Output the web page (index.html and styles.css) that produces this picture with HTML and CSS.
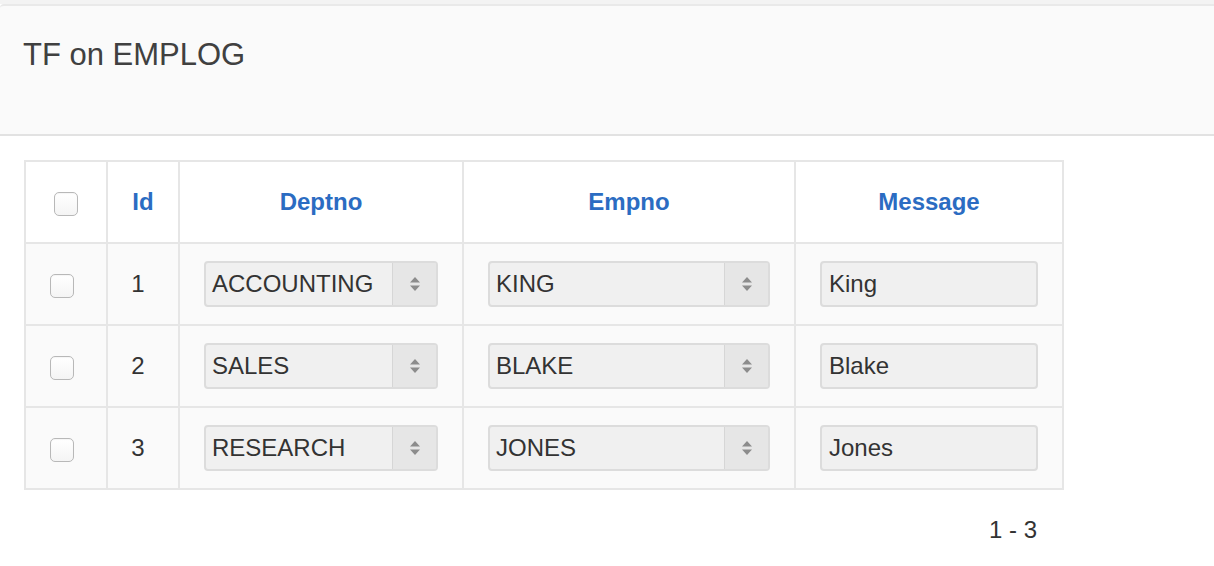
FILE: index.html
```html
<!DOCTYPE html>
<html lang="en">
<head>
<meta charset="utf-8">
<title>TF on EMPLOG</title>
<link rel="stylesheet" href="styles.css">
</head>
<body>
<div class="topstrip"></div>
<header class="region-head">
  <h1 class="title">TF on EMPLOG</h1>
</header>
<main class="content">
  <table class="grid">
    <colgroup>
      <col class="c-check">
      <col class="c-id">
      <col class="c-dept">
      <col class="c-emp">
      <col class="c-msg">
    </colgroup>
    <thead>
      <tr>
        <th class="hcheck"><input type="checkbox" class="cb"></th>
        <th>Id</th>
        <th>Deptno</th>
        <th>Empno</th>
        <th>Message</th>
      </tr>
    </thead>
    <tbody>
      <tr>
        <td class="bcheck"><input type="checkbox" class="cb"></td>
        <td class="idcell">1</td>
        <td><div class="sel"><span class="sel-text">ACCOUNTING</span><span class="sel-btn"><svg width="10" height="14" viewBox="0 0 10 14"><path d="M5 0 L10 5.5 L0 5.5 Z M5 14 L10 8.5 L0 8.5 Z" fill="#8c8c8c"/></svg></span></div></td>
        <td><div class="sel"><span class="sel-text">KING</span><span class="sel-btn"><svg width="10" height="14" viewBox="0 0 10 14"><path d="M5 0 L10 5.5 L0 5.5 Z M5 14 L10 8.5 L0 8.5 Z" fill="#8c8c8c"/></svg></span></div></td>
        <td><div class="inp">King</div></td>
      </tr>
      <tr>
        <td class="bcheck"><input type="checkbox" class="cb"></td>
        <td class="idcell">2</td>
        <td><div class="sel"><span class="sel-text">SALES</span><span class="sel-btn"><svg width="10" height="14" viewBox="0 0 10 14"><path d="M5 0 L10 5.5 L0 5.5 Z M5 14 L10 8.5 L0 8.5 Z" fill="#8c8c8c"/></svg></span></div></td>
        <td><div class="sel"><span class="sel-text">BLAKE</span><span class="sel-btn"><svg width="10" height="14" viewBox="0 0 10 14"><path d="M5 0 L10 5.5 L0 5.5 Z M5 14 L10 8.5 L0 8.5 Z" fill="#8c8c8c"/></svg></span></div></td>
        <td><div class="inp">Blake</div></td>
      </tr>
      <tr>
        <td class="bcheck"><input type="checkbox" class="cb"></td>
        <td class="idcell">3</td>
        <td><div class="sel"><span class="sel-text">RESEARCH</span><span class="sel-btn"><svg width="10" height="14" viewBox="0 0 10 14"><path d="M5 0 L10 5.5 L0 5.5 Z M5 14 L10 8.5 L0 8.5 Z" fill="#8c8c8c"/></svg></span></div></td>
        <td><div class="sel"><span class="sel-text">JONES</span><span class="sel-btn"><svg width="10" height="14" viewBox="0 0 10 14"><path d="M5 0 L10 5.5 L0 5.5 Z M5 14 L10 8.5 L0 8.5 Z" fill="#8c8c8c"/></svg></span></div></td>
        <td><div class="inp">Jones</div></td>
      </tr>
    </tbody>
  </table>
  <div class="pager">1 - 3</div>
</main>
</body>
</html>
```

FILE: styles.css
```css
* { box-sizing: border-box; }
html, body {
  margin: 0;
  padding: 0;
  background: #ffffff;
  font-family: "Liberation Sans", Arial, Helvetica, sans-serif;
  color: #333333;
}
.topstrip {
  height: 4px;
  background: #f3f3f3;
}
.region-head {
  background: #fafafa;
  border-top: 2px solid #e9e9e9;
  border-bottom: 2px solid #e2e2e2;
  border-top-left-radius: 4px;
  height: 132px;
  padding: 31px 0 0 23px;
}
.title {
  margin: 0;
  font-size: 31px;
  line-height: 36px;
  font-weight: normal;
  color: #404040;
}
.content {
  padding: 24px 0 0 24px;
}
.grid {
  table-layout: fixed;
  width: 1040px;
  border-collapse: separate;
  border-spacing: 0;
  border-top: 2px solid #e6e6e6;
  border-left: 2px solid #e6e6e6;
}
.c-check { width: 82px; }
.c-id { width: 72px; }
.c-dept { width: 284px; }
.c-emp { width: 332px; }
.c-msg { width: 268px; }
.grid th, .grid td {
  border-right: 2px solid #e6e6e6;
  border-bottom: 2px solid #e6e6e6;
  text-align: center;
  vertical-align: middle;
  padding: 17px 24px;
  height: 82px;
  font-size: 24px;
}
.grid th {
  background: #ffffff;
  color: #2b6cc2;
  font-weight: bold;
  padding-top: 17px;
}
.grid td {
  background: #fafafa;
  color: #333333;
}
.grid td.idcell {
  padding: 17px 10px 17px 0;
}
.grid th.hcheck, .grid td.bcheck {
  padding: 0;
}
.grid td.bcheck {
  padding-right: 8px;
}
.cb {
  appearance: none;
  -webkit-appearance: none;
  width: 24px;
  height: 24px;
  margin: 0;
  border: 1px solid #b8b8b8;
  border-radius: 5px;
  background: linear-gradient(#ffffff, #f4f4f4);
  box-shadow: inset 0 1px 1px rgba(0,0,0,0.04);
  vertical-align: middle;
  display: inline-block;
}
.sel {
  display: flex;
  align-items: stretch;
  height: 46px;
  background: #f0f0f0;
  border: 2px solid #dcdcdc;
  border-radius: 4px;
  overflow: hidden;
  text-align: left;
}
.sel-text {
  flex: 1;
  display: flex;
  align-items: center;
  padding-left: 6px;
  font-size: 24px;
  color: #333333;
  white-space: nowrap;
}
.sel-btn {
  width: 44px;
  flex: none;
  display: flex;
  align-items: center;
  justify-content: center;
  background: #e6e6e6;
  border-left: 1px solid #d6d6d6;
}
.sel-btn svg { display: block; }
.inp {
  height: 46px;
  background: #f0f0f0;
  border: 2px solid #dcdcdc;
  border-radius: 4px;
  text-align: left;
  display: flex;
  align-items: center;
  padding-left: 7px;
  font-size: 24px;
  color: #333333;
}
.pager {
  width: 1040px;
  text-align: right;
  padding: 26px 27px 0 0;
  font-size: 24px;
  line-height: 28px;
  color: #333333;
}
```
